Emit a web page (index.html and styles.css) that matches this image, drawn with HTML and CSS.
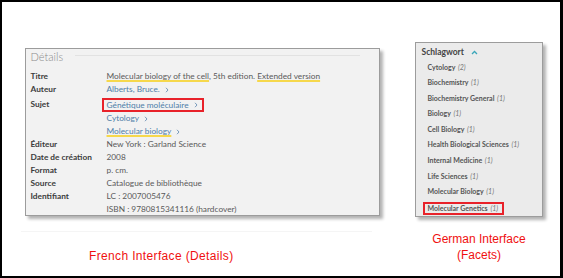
FILE: index.html
```html
<!DOCTYPE html>
<html>
    <head>
        <title>Details / Facets</title>
        <meta name="viewport" content="width=device-width, initial-scale=1.0">
        <link rel="stylesheet" href="styles.css">
    </head>
    <body>
        <div class="frame">
            <div class="col col-details">
                <section class="details">
                    <div class="details-head">
                        <span class="details-title">Détails</span>
                        <span class="rule"></span>
                    </div>
                    <div class="fields">
                        <span class="label">Titre</span>
                        <span class="value"><span class="hl">Molecular biology of the cell</span>, 5th edition. <span class="hl">Extended version</span></span>

                        <span class="label">Auteur</span>
                        <span class="value"><a class="link">Alberts, Bruce.</a><svg class="chev" width="4" height="6" viewBox="0 0 4 6"><polyline points="1,0.8 3,3 1,5.2"/></svg></span>

                        <span class="label label-tall">Sujet</span>
                        <span class="value value-tall"><span class="boxed"><a class="link">Génétique moléculaire</a><svg class="chev" width="4" height="6" viewBox="0 0 4 6"><polyline points="1,0.8 3,3 1,5.2"/></svg></span></span>

                        <span class="label"></span>
                        <span class="value"><a class="link">Cytology</a><svg class="chev" width="4" height="6" viewBox="0 0 4 6"><polyline points="1,0.8 3,3 1,5.2"/></svg></span>

                        <span class="label"></span>
                        <span class="value"><a class="link hl">Molecular biology</a><svg class="chev" width="4" height="6" viewBox="0 0 4 6"><polyline points="1,0.8 3,3 1,5.2"/></svg></span>

                        <span class="label">Éditeur</span>
                        <span class="value">New York : Garland Science</span>

                        <span class="label">Date de création</span>
                        <span class="value">2008</span>

                        <span class="label">Format</span>
                        <span class="value">p. cm.</span>

                        <span class="label">Source</span>
                        <span class="value">Catalogue de bibliothèque</span>

                        <span class="label">Identifiant</span>
                        <span class="value">LC : 2007005476<br>ISBN : 9780815341116 (hardcover)</span>
                    </div>
                </section>
                <div class="details-foot"></div>
                <p class="caption caption-fr">French Interface (Details)</p>
            </div>
            <div class="col col-facets">
                <section class="facets">
                    <h4 class="facets-head">Schlagwort
                        <svg class="up" width="7" height="5" viewBox="0 0 7 5"><polyline points="1,4 3.5,1.5 6,4" fill="none" stroke="#3aa6b9" stroke-width="1.3"/></svg>
                    </h4>
                    <ul class="facet-list">
                        <li>Cytology <i>(2)</i></li>
                        <li>Biochemistry <i>(1)</i></li>
                        <li>Biochemistry General <i>(1)</i></li>
                        <li>Biology <i>(1)</i></li>
                        <li>Cell Biology <i>(1)</i></li>
                        <li>Health Biological Sciences <i>(1)</i></li>
                        <li>Internal Medicine <i>(1)</i></li>
                        <li>Life Sciences <i>(1)</i></li>
                        <li>Molecular Biology <i>(1)</i></li>
                        <li><span class="boxed">Molecular Genetics <i>(1)</i></span></li>
                    </ul>
                </section>
                <p class="caption caption-de">German Interface<br>(Facets)</p>
            </div>
        </div>
    </body>
</html>
```

FILE: styles.css
```css
body {
    margin: 0;
    background-color: #fff;
}
.frame {
    display: flex;
    align-items: flex-start;
    box-sizing: border-box;
    width: 563px;
    height: 278px;
    border: 2px solid #000;
    border-right-width: 3px;
    background-color: #fff;
    font-family: Lato, "Liberation Sans", sans-serif;
}
.col-details {
    margin-left: 23px;
    margin-top: 45.5px;
    width: 355px;
}
.details {
    box-sizing: border-box;
    height: 168px;
    background-color: #f2f2f2;
    border: 1px solid #9c9c9c;
    box-shadow: 3px 3px 3px rgba(0, 0, 0, 0.3);
    padding: 0 4.5px;
}
.details-head {
    display: flex;
    align-items: center;
    height: 15px;
}
.details-title {
    font-size: 11px;
    font-weight: 300;
    color: #8a8a8a;
}
.rule {
    flex: 1;
    height: 1px;
    margin: 0 15px 1px 12px;
    background-color: #e2e2e2;
}
.fields {
    display: grid;
    grid-template-columns: 76px auto;
    margin-top: 6.5px;
    font-size: 8.3px;
    line-height: 13px;
}
.label {
    font-weight: 700;
    color: #3c3c3c;
}
.value {
    color: #5a5a5a;
}
.label-tall, .value-tall {
    line-height: 16px;
}
.link {
    color: #4e7ea9;
}
.hl {
    text-decoration: underline 2px #f6d84c;
    text-underline-offset: 1px;
    text-decoration-skip-ink: none;
}
.chev {
    margin-left: 5px;
    vertical-align: -0.5px;
    fill: none;
    stroke: #6b91b5;
    stroke-width: 0.9;
}
.boxed {
    display: inline-block;
    border: 2px solid #e8222a;
    margin-left: -5px;
    padding: 0 4px 0 3px;
    line-height: 10px;
    vertical-align: middle;
}
.details-foot {
    margin: 15.5px 8px 0 -4px;
    border-top: 1px solid #f5f5f5;
}
.caption {
    margin: 0;
    font-family: "Liberation Sans", Arial, sans-serif;
    font-size: 12px;
    color: #f01010;
}
.caption-fr {
    margin-top: 16px;
    margin-left: 64px;
    line-height: 16px;
    letter-spacing: 0.35px;
}
.col-facets {
    margin-left: 35px;
    margin-top: 39.5px;
    width: 128px;
}
.facets {
    box-sizing: border-box;
    height: 175px;
    background-color: #ebebeb;
    border: 1px solid #9c9c9c;
    box-shadow: 3px 3px 3px rgba(0, 0, 0, 0.3);
    padding: 2.5px 0 0 5.5px;
}
.facets-head {
    margin: 0;
    font-size: 8.5px;
    line-height: 14px;
    font-weight: 700;
    color: #444;
}
.up {
    margin-left: 5px;
    vertical-align: 0;
}
.facet-list {
    list-style: none;
    margin: 0.5px 0 0;
    padding: 0 0 0 6px;
    font-size: 7px;
    line-height: 15.6px;
    font-weight: 700;
    color: #555;
}
.facet-list i {
    font-weight: 400;
    color: #777;
    margin-left: 1px;
}
.facet-list .boxed {
    margin-left: -5px;
    padding: 0 4px 0 3px;
    line-height: 9px;
}
.caption-de {
    margin-top: 14.5px;
    text-align: center;
    line-height: 16.4px;
}
```
